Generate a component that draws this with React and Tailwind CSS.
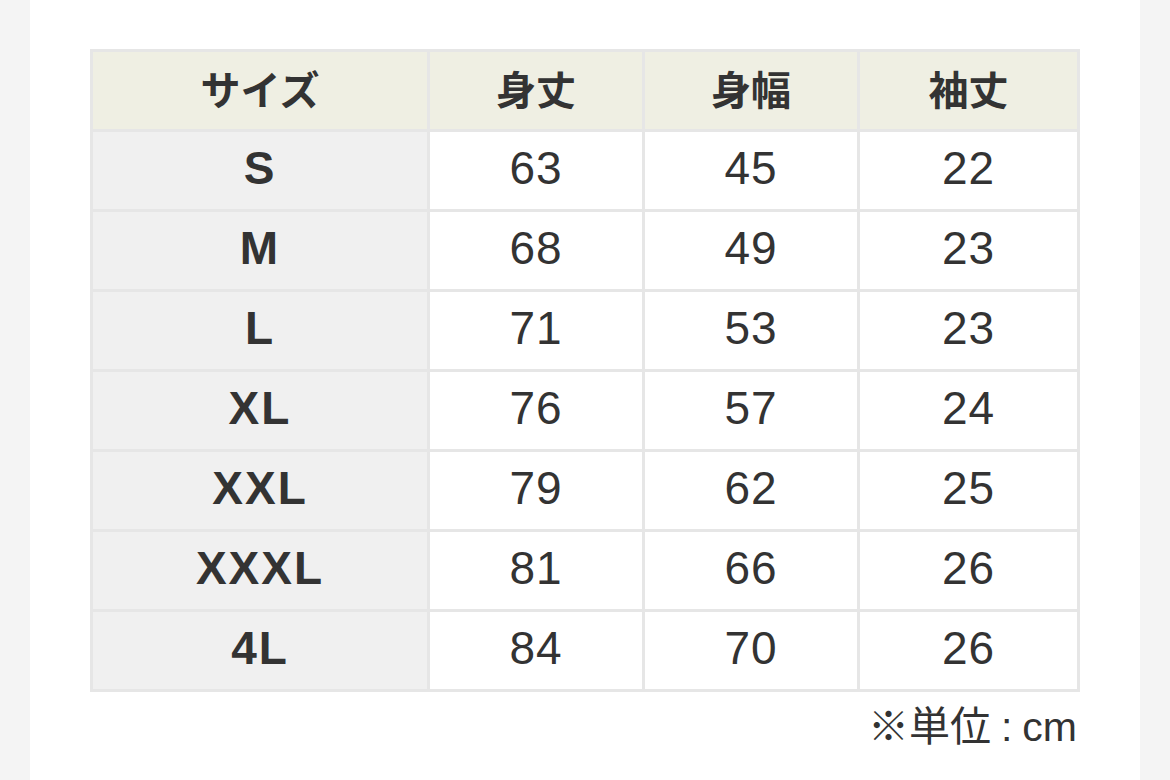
import React from "react";

const rows = [
  ["S", "63", "45", "22"],
  ["M", "68", "49", "23"],
  ["L", "71", "53", "23"],
  ["XL", "76", "57", "24"],
  ["XXL", "79", "62", "25"],
  ["XXXL", "81", "66", "26"],
  ["4L", "84", "70", "26"],
];

const font = { fontFamily: '"Liberation Sans", "Noto Sans CJK JP", sans-serif' };
const jp = { fontFamily: '"Noto Sans CJK JP", sans-serif' };

export default function App() {
  return (
    <div className="w-[1170px] h-[780px] bg-[#f4f4f4] overflow-hidden" style={font}>
      <div className="mx-[30px] w-[1110px] h-[780px] bg-white pt-[49px] pl-[60px]">
        <div className="w-[990px] grid grid-cols-[334px_212px_212px_217px] auto-rows-[77px] gap-[3px] p-[3px] bg-[#e6e6e6] text-[#333]">
          {["サイズ", "身丈", "身幅", "袖丈"].map((h) => (
            <div
              key={h}
              className="bg-[#efefe3] flex items-center justify-center text-[40px] font-bold leading-none pb-[6px]"
              style={jp}
            >
              {h}
            </div>
          ))}
          {rows.map((r) =>
            r.map((c, i) => (
              <div
                key={r[0] + i}
                className={
                  i === 0
                    ? "bg-[#f0f0f0] flex items-center justify-center text-[46px] font-bold tracking-[2px] pb-[4px]"
                    : "bg-white flex items-center justify-center text-[46px] tracking-[1px] pb-[4px]"
                }
              >
                {c}
              </div>
            ))
          )}
        </div>
        <div className="w-[990px] flex items-baseline justify-end pr-[3px] mt-[4px] text-[41px] leading-[54px] text-[#333]">
          <span style={jp}>※単位</span>
          <span className="ml-[10px] mr-[10px]">:</span>
          <span>cm</span>
        </div>
      </div>
    </div>
  );
}
